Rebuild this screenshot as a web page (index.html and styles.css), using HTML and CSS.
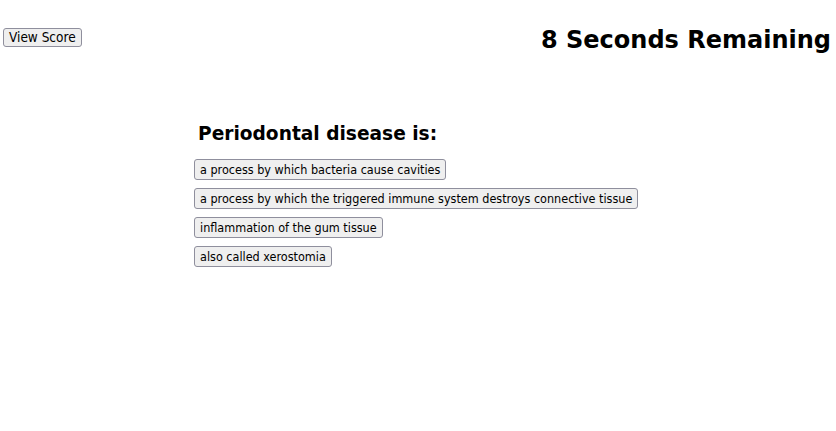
FILE: index.html
```html
<!DOCTYPE html>
<html>
<head>
<meta charset="utf-8">
<link rel="stylesheet" href="styles.css">
</head>
<body>
<div class="top">
  <button class="btn btn-score">View Score</button>
  <h1 class="timer">8 Seconds Remaining</h1>
</div>
<div class="quiz">
  <h2 class="question">Periodontal disease is:</h2>
  <div class="answers">
    <div><button class="btn">a process by which bacteria cause cavities</button></div>
    <div><button class="btn">a process by which the triggered immune system destroys connective tissue</button></div>
    <div><button class="btn">inflammation of the gum tissue</button></div>
    <div><button class="btn">also called xerostomia</button></div>
  </div>
</div>
</body>
</html>
```
FILE: styles.css
```css
html, body { margin: 0; padding: 0; background: #fff; }
body { font-family: "DejaVu Sans", Verdana, sans-serif; color: #000; }
.top {
  display: flex;
  justify-content: space-between;
  align-items: flex-start;
  padding: 28px 5px 0 3px;
}
.btn {
  font-family: "DejaVu Sans Condensed", "DejaVu Sans", sans-serif;
  font-size: 12.5px;
  background: #efefef;
  border: 1px solid #8f8f9d;
  border-radius: 3px;
  padding: 2px 5px;
  color: #000;
  line-height: 15px;
  height: 21px;
  margin: 0;
}
.btn-score {
  font-size: 13.5px;
  height: 19px;
  line-height: 13px;
  padding: 2px 5px;
}
.timer {
  margin: -2px 0 0 0;
  font-size: 24px;
  font-weight: bold;
  line-height: 28px;
}
.quiz { padding: 68px 0 0 194px; }
.question {
  margin: 0 0 13px 4px;
  font-size: 18.6px;
  font-weight: bold;
  line-height: 24px;
}
.answers { display: flex; flex-direction: column; gap: 8px; align-items: flex-start; }
```
